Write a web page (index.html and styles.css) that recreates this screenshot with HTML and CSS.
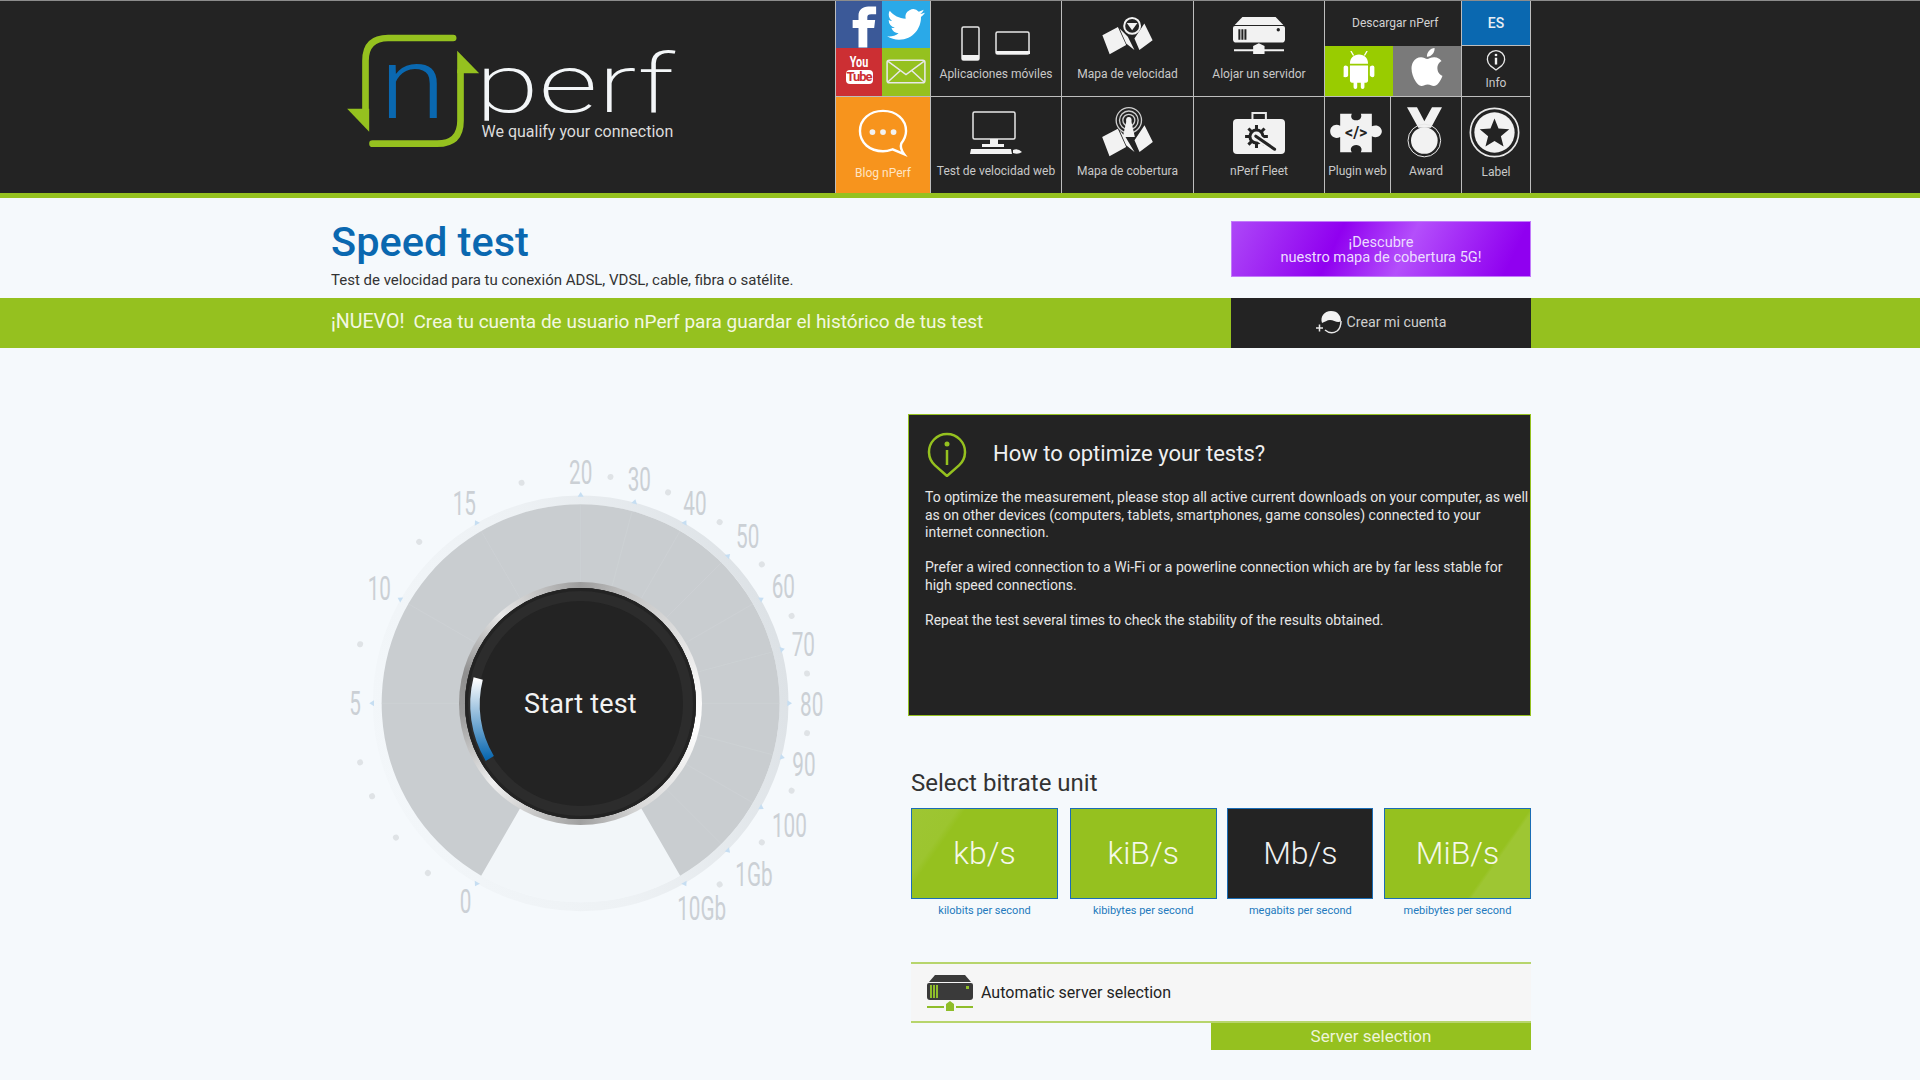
FILE: index.html
```html
<!DOCTYPE html>
<html lang="en">
<head>
    <meta charset="UTF-8">
    <meta name="viewport" content="width=device-width, initial-scale=1.0">
    <title>nPerf Speed test</title>
    <link rel="stylesheet" href="styles.css">
</head>
<body>
    <header class="topbar">
        <a class="logo" href="#">
            <svg class="logo-svg" viewBox="70 90 1010 360">
                <defs>
                    <clipPath id="perfClip"><rect x="460" y="150" width="620" height="212"/></clipPath>
                </defs>
                <path class="logo-arrow" d="M400 114H205Q137 114 137 182V335"/>
                <path class="logo-head" d="M82 326H148V395Z"/>
                <path class="logo-arrow" d="M158 431H352Q422 431 422 362V215"/>
                <path class="logo-head" d="M412 152L478 220H412Z"/>
                <text class="logo-n" transform="translate(180 355) scale(1.2 1)">n</text>
                <g clip-path="url(#perfClip)">
                    <text class="logo-perf" transform="translate(466 335) scale(1.41 1)">perf</text>
                </g>
                <text class="logo-tag" x="485" y="410">We qualify your connection</text>
            </svg>
        </a>
        <nav class="menu">
            <div class="social">
                <a class="social-item fb" href="#">
                    <svg viewBox="0 0 47 47"><path d="M23 47V27H17V19H23V14C23 9 27 5 33 5H41V13H36C33 13 32 14 32 16V19H40L39 27H32V47Z"/></svg>
                </a>
                <a class="social-item tw" href="#">
                    <svg viewBox="-3 -3 30 30"><path d="M23.953 4.57a10 10 0 01-2.825.775 4.958 4.958 0 002.163-2.723c-.951.555-2.005.959-3.127 1.184a4.92 4.92 0 00-8.384 4.482C7.69 8.095 4.067 6.13 1.64 3.162a4.822 4.822 0 00-.666 2.475c0 1.71.87 3.213 2.188 4.096a4.904 4.904 0 01-2.228-.616v.06a4.923 4.923 0 003.946 4.827 4.996 4.996 0 01-2.212.085 4.936 4.936 0 004.604 3.417 9.867 9.867 0 01-6.102 2.105c-.39 0-.779-.023-1.17-.067a13.995 13.995 0 007.557 2.209c9.053 0 13.998-7.496 13.998-13.985 0-.21 0-.42-.015-.63A9.935 9.935 0 0024 4.59z"/></svg>
                </a>
                <a class="social-item yt" href="#">
                    <span class="yt-you">You</span>
                    <span class="yt-tube">Tube</span>
                </a>
                <a class="social-item mail" href="#">
                    <svg viewBox="0 0 47 47"><rect class="line-icon" x="5" y="12" width="37" height="22" rx="2"/><path class="line-icon" d="M6 13L23.5 26L41 13M6 33L18 22M41 33L29 22"/></svg>
                </a>
            </div>
            <a class="cell" href="#">
                <svg class="icon icon-apps" viewBox="0 0 70 35">
                    <rect class="line-icon" x="1" y="1" width="17" height="33" rx="1.5"/>
                    <rect class="solid" x="1" y="29" width="17" height="5"/>
                    <rect class="line-icon" x="35" y="6" width="33" height="22" rx="1.5"/>
                    <rect class="solid" x="35" y="25" width="34" height="3"/>
                </svg>
                <span class="cell-label">Aplicaciones móviles</span>
            </a>
            <a class="cell" href="#">
                <svg class="icon icon-map" viewBox="0 0 152 115">
                    <path class="solid" d="M0 55L47 30L72 85L22 113ZM52 35L77 60L97 100L72 80ZM97 65L127 20L152 70L112 100Z"/>
                    <circle class="pin" cx="90" cy="27" r="24"/>
                    <path class="solid" d="M74 18H106L90 40Z"/>
                </svg>
                <span class="cell-label">Mapa de velocidad</span>
            </a>
            <a class="cell" href="#">
                <svg class="icon icon-server" viewBox="0 0 155 110">
                    <path class="solid" d="M28 0H127L150 24H5Z"/>
                    <path class="solid" d="M0 33Q0 27 6 27H149Q155 27 155 33V66Q155 76 145 76H10Q0 76 0 66Z"/>
                    <path class="cut" d="M16 36H22V68H16ZM25 36H31V68H25ZM34 36H40V68H34Z"/>
                    <circle class="cut" cx="135" cy="38" r="5"/>
                    <path class="solid" d="M3 96H60V86L77 78L94 86V96H152V102H94V110H60V102H3Z"/>
                </svg>
                <span class="cell-label">Alojar un servidor</span>
            </a>
            <div class="download">
                <div class="download-title">Descargar nPerf</div>
                <div class="stores">
                    <a class="store android" href="#">
                        <svg viewBox="0 0 34 42">
                            <path d="M7 14C7 8 11 4 17 4S27 8 27 14ZM7 16H27V33Q27 35 25 35H23V40Q23 42 21 42T19 40V35H15V40Q15 42 13 42T11 40V35H9Q7 35 7 33ZM2 16Q5 16 5 18V27Q5 29 2 29T0 27V18Q0 16 2 16ZM32 16Q34 16 34 18V27Q34 29 32 29T29 27V18Q29 16 32 16Z"/>
                            <path d="M11 5L8 0M23 5L26 0" class="android-ant"/>
                        </svg>
                    </a>
                    <a class="store apple" href="#">
                        <svg viewBox="0 0 24 24"><path d="M12.152 6.896c-.948 0-2.415-1.078-3.96-1.04-2.04.027-3.91 1.183-4.961 3.014-2.117 3.675-.546 9.103 1.519 12.09 1.013 1.454 2.208 3.09 3.792 3.039 1.52-.065 2.09-.987 3.935-.987 1.831 0 2.35.987 3.96.948 1.637-.026 2.676-1.48 3.676-2.948 1.156-1.688 1.636-3.325 1.662-3.415-.039-.013-3.182-1.221-3.22-4.857-.026-3.04 2.48-4.494 2.597-4.559-1.429-2.09-3.623-2.324-4.39-2.376-2-.156-3.675 1.09-4.61 1.09zM15.53 3.83c.843-1.012 1.4-2.427 1.245-3.83-1.207.052-2.662.805-3.532 1.818-.78.896-1.454 2.338-1.273 3.714 1.338.104 2.715-.688 3.559-1.701"/></svg>
                    </a>
                </div>
            </div>
            <div class="lang-info">
                <a class="lang" href="#">ES</a>
                <a class="info-link" href="#">
                    <svg class="icon-info" viewBox="0 0 22 24">
                        <path class="line-icon" d="M11 23L5 18.5A9.5 9.5 0 1 1 17 18.5Z"/>
                        <circle class="solid" cx="11" cy="6.5" r="1.5"/>
                        <rect class="solid" x="9.7" y="9.5" width="2.6" height="7.5"/>
                    </svg>
                    <span class="cell-label">Info</span>
                </a>
            </div>
            <a class="cell blog" href="#">
                <svg class="icon icon-blog" viewBox="0 0 52 50">
                    <path class="line-icon thick" d="M26 2C12 2 2 11 2 23S12 44 26 44C30 44 33 43 36 42L48 47C45 43 44 39 45 36C48 32 50 28 50 23C50 11 40 2 26 2Z"/>
                    <circle class="solid" cx="15" cy="24" r="3"/>
                    <circle class="solid" cx="26" cy="24" r="3"/>
                    <circle class="solid" cx="37" cy="24" r="3"/>
                </svg>
                <span class="cell-label">Blog nPerf</span>
            </a>
            <a class="cell" href="#">
                <svg class="icon icon-desktop" viewBox="0 0 52 43">
                    <rect class="line-icon" x="3" y="1" width="42" height="27" rx="1.5"/>
                    <path class="solid" d="M20 28H28V33H34V36H12V33H20Z"/>
                    <path class="solid" d="M1 38H41L42 43H0ZM43 39Q48 37 52 41Q48 44 43 42Z"/>
                </svg>
                <span class="cell-label">Test de velocidad web</span>
            </a>
            <a class="cell" href="#">
                <svg class="icon icon-cover" viewBox="0 0 152 150">
                    <path class="solid" d="M0 90L47 65L72 120L22 148ZM52 70L70 90L97 135L72 115ZM97 100L127 55L152 105L112 135Z"/>
                    <circle class="ring" cx="80" cy="40" r="38"/>
                    <circle class="ring" cx="80" cy="40" r="28"/>
                    <circle class="ring" cx="80" cy="40" r="18"/>
                    <path class="solid" d="M80 30Q90 30 88 45L98 90H62L72 45Q70 30 80 30Z"/>
                </svg>
                <span class="cell-label">Mapa de cobertura</span>
            </a>
            <a class="cell" href="#">
                <svg class="icon icon-fleet" viewBox="0 0 155 128">
                    <path class="line-icon thick-case" d="M58 26V6H98V26"/>
                    <rect class="solid" x="0" y="24" width="155" height="104" rx="12"/>
                    <circle class="gear" cx="70" cy="76" r="24"/>
                    <path class="gear-teeth" d="M70 42V110M36 76H104M46 52L94 100M94 52L46 100"/>
                    <circle class="solid" cx="70" cy="76" r="15"/>
                    <path class="wrench-edge" d="M74 80L120 112"/>
                    <path class="wrench" d="M68 75L124 114"/>
                </svg>
                <span class="cell-label">nPerf Fleet</span>
            </a>
            <a class="cell shift-left" href="#">
                <svg class="icon icon-plugin" viewBox="0 0 155 120">
                    <path class="solid" d="M30 2H65C60 12 65 22 78 22S96 12 92 2H125V40C140 32 155 42 155 55S140 78 125 70V118H92C98 108 92 96 78 96S58 108 65 118H30V72C15 80 0 70 0 55S15 30 30 38Z"/>
                    <text class="plugin-code" x="78" y="75">&lt;/&gt;</text>
                </svg>
                <span class="cell-label">Plugin web</span>
            </a>
            <a class="cell shift-left" href="#">
                <svg class="icon icon-award" viewBox="0 0 105 152">
                    <path class="solid" d="M0 0H30L52 42L75 0H105L72 62H34Z"/>
                    <circle class="line-icon award-rim" cx="52" cy="100" r="49"/>
                    <circle class="solid" cx="52" cy="100" r="40"/>
                </svg>
                <span class="cell-label">Award</span>
            </a>
            <a class="cell shift-left" href="#">
                <svg class="icon icon-label" viewBox="0 0 152 152">
                    <circle class="line-icon label-rim" cx="76" cy="76" r="72"/>
                    <circle class="solid" cx="76" cy="76" r="60"/>
                    <path class="cut" d="M76 34L88 64L120 66L95 87L103 118L76 101L49 118L57 87L32 66L64 64Z"/>
                </svg>
                <span class="cell-label">Label</span>
            </a>
        </nav>
    </header>

    <section class="intro">
        <div class="wrap intro-row">
            <div>
                <h1>Speed test</h1>
                <p class="intro-text">Test de velocidad para tu conexión ADSL, VDSL, cable, fibra o satélite.</p>
            </div>
            <a class="promo" href="#">¡Descubre<br>nuestro mapa de cobertura 5G!</a>
        </div>
    </section>

    <section class="banner">
        <div class="wrap banner-row">
            <p class="banner-text"><span class="banner-new">¡NUEVO!</span>Crea tu cuenta de usuario nPerf para guardar el histórico de tus test</p>
            <a class="signup" href="#">
                <svg class="signup-icon" viewBox="0 0 26 24">
                    <path class="signup-fill" d="M6 13C4 7 8 1 15 1S25 6 25 11C22 14 18 10 14 10C11 10 9 12 6 13Z"/>
                    <path class="line-icon" d="M9 20Q15 25 21 21Q25 18 25 11"/>
                    <path class="line-icon" d="M0 18H7M3.5 14.5V21.5"/>
                </svg>
                Crear mi cuenta
            </a>
        </div>
    </section>

    <main class="wrap content">
        <div class="gauge">
            <svg class="gauge-svg" viewBox="0 0 1560 1500">
                <defs>
                    <linearGradient id="ringGrad" x1="0" y1="0.7" x2="1" y2="0.4">
                        <stop offset="0" stop-color="#f3f7fa"/>
                        <stop offset="0.5" stop-color="#edf1f4"/>
                        <stop offset="1" stop-color="#dde2e6"/>
                    </linearGradient>
                    <path id="tick" d="M-9 -620L0 -634L9 -620Z"/>
                </defs>
                <circle class="gauge-ring" cx="752" cy="790" r="610"/>
                <circle class="gauge-floor" cx="752" cy="790" r="597"/>
                <path class="gauge-sector" d="M752 790L1050.5 1307A597 597 0 1 0 453.5 1307Z"/>
                <g class="gauge-lines" transform="translate(752 790)">
                    <line y1="-365" y2="-597"/>
                    <line y1="-365" y2="-597" transform="rotate(15)"/>
                    <line y1="-365" y2="-597" transform="rotate(30)"/>
                    <line y1="-365" y2="-597" transform="rotate(45)"/>
                    <line y1="-365" y2="-597" transform="rotate(60)"/>
                    <line y1="-365" y2="-597" transform="rotate(75)"/>
                    <line y1="-365" y2="-597" transform="rotate(90)"/>
                    <line y1="-365" y2="-597" transform="rotate(105)"/>
                    <line y1="-365" y2="-597" transform="rotate(120)"/>
                    <line y1="-365" y2="-597" transform="rotate(135)"/>
                    <line y1="-365" y2="-597" transform="rotate(-30)"/>
                    <line y1="-365" y2="-597" transform="rotate(-60)"/>
                    <line y1="-365" y2="-597" transform="rotate(-90)"/>
                </g>
                <g class="gauge-ticks" transform="translate(752 790)">
                    <use href="#tick"/>
                    <use href="#tick" transform="rotate(15)"/>
                    <use href="#tick" transform="rotate(30)"/>
                    <use href="#tick" transform="rotate(45)"/>
                    <use href="#tick" transform="rotate(60)"/>
                    <use href="#tick" transform="rotate(75)"/>
                    <use href="#tick" transform="rotate(90)"/>
                    <use href="#tick" transform="rotate(105)"/>
                    <use href="#tick" transform="rotate(120)"/>
                    <use href="#tick" transform="rotate(135)"/>
                    <use href="#tick" transform="rotate(150)"/>
                    <use href="#tick" transform="rotate(-30)"/>
                    <use href="#tick" transform="rotate(-60)"/>
                    <use href="#tick" transform="rotate(-90)"/>
                    <use href="#tick" transform="rotate(-150)"/>
                </g>
                <g class="gauge-dots" transform="translate(752 790)">
                    <circle cy="-685" r="9" transform="rotate(7.5)"/>
                    <circle cy="-685" r="9" transform="rotate(22.5)"/>
                    <circle cy="-685" r="9" transform="rotate(37.5)"/>
                    <circle cy="-685" r="9" transform="rotate(52.5)"/>
                    <circle cy="-685" r="9" transform="rotate(67.5)"/>
                    <circle cy="-685" r="9" transform="rotate(82.5)"/>
                    <circle cy="-685" r="9" transform="rotate(97.5)"/>
                    <circle cy="-685" r="9" transform="rotate(112.5)"/>
                    <circle cy="-685" r="9" transform="rotate(127.5)"/>
                    <circle cy="-685" r="9" transform="rotate(142.5)"/>
                    <circle cy="-685" r="9" transform="rotate(-15)"/>
                    <circle cy="-685" r="9" transform="rotate(-45)"/>
                    <circle cy="-685" r="9" transform="rotate(-75)"/>
                    <circle cy="-685" r="9" transform="rotate(-105)"/>
                    <circle cy="-685" r="9" transform="rotate(-114)"/>
                    <circle cy="-685" r="9" transform="rotate(-126)"/>
                    <circle cy="-685" r="9" transform="rotate(-138)"/>
                </g>
                <g class="gauge-nums">
                    <text transform="translate(407 1420) scale(.64 1)">0</text>
                    <text transform="translate(75 825) scale(.64 1)">5</text>
                    <text transform="translate(148 480) scale(.64 1)">10</text>
                    <text transform="translate(403 225) scale(.64 1)">15</text>
                    <text transform="translate(752 132) scale(.64 1)">20</text>
                    <text transform="translate(928 153) scale(.64 1)">30</text>
                    <text transform="translate(1095 225) scale(.64 1)">40</text>
                    <text transform="translate(1253 325) scale(.64 1)">50</text>
                    <text transform="translate(1360 475) scale(.64 1)">60</text>
                    <text transform="translate(1420 648) scale(.64 1)">70</text>
                    <text transform="translate(1445 828) scale(.64 1)">80</text>
                    <text transform="translate(1422 1008) scale(.64 1)">90</text>
                    <text transform="translate(1378 1190) scale(.64 1)">100</text>
                    <text transform="translate(1272 1338) scale(.64 1)">1Gb</text>
                    <text transform="translate(1115 1440) scale(.64 1)">10Gb</text>
                </g>
            </svg>
            <button class="dial">
                <span class="dial-inner">
                    <svg class="dial-arc" viewBox="0 0 243 243">
                        <defs>
                            <linearGradient id="arcGrad" x1="0" y1="0" x2="0" y2="1">
                                <stop offset="0" stop-color="#ffffff"/>
                                <stop offset="1" stop-color="#0a68b0"/>
                            </linearGradient>
                        </defs>
                        <path d="M19.2 96.5A105.3 105.3 0 0 0 30.8 176.5"/>
                    </svg>
                    <span class="dial-text">Start test</span>
                </span>
            </button>
        </div>

        <div class="side">
            <div class="tips">
                <div class="tips-head">
                    <svg class="tips-icon" viewBox="0 0 40 45">
                        <path d="M20 44L8 33.4A18 18 0 1 1 32 33.4Z"/>
                        <circle cx="20" cy="12" r="2.5" class="tips-dot"/>
                        <line x1="20" y1="18" x2="20" y2="33"/>
                    </svg>
                    <h2>How to optimize your tests?</h2>
                </div>
                <p>To optimize the measurement, please stop all active current downloads on your computer, as well as on other devices (computers, tablets, smartphones, game consoles) connected to your internet connection.</p>
                <p>Prefer a wired connection to a Wi-Fi or a powerline connection which are by far less stable for high speed connections.</p>
                <p>Repeat the test several times to check the stability of the results obtained.</p>
            </div>

            <div class="units">
                <h3>Select bitrate unit</h3>
                <div class="unit-row">
                    <div class="unit">
                        <a class="unit-btn shine-left" href="#">kb/s</a>
                        <span class="unit-caption">kilobits per second</span>
                    </div>
                    <div class="unit unit-second">
                        <a class="unit-btn" href="#">kiB/s</a>
                        <span class="unit-caption">kibibytes per second</span>
                    </div>
                    <div class="unit">
                        <a class="unit-btn active" href="#">Mb/s</a>
                        <span class="unit-caption">megabits per second</span>
                    </div>
                    <div class="unit">
                        <a class="unit-btn shine-right" href="#">MiB/s</a>
                        <span class="unit-caption">mebibytes per second</span>
                    </div>
                </div>
            </div>

            <div class="server">
                <div class="server-row">
                    <svg class="server-icon" viewBox="0 0 46 36">
                        <path class="server-dark" d="M8 0H38L44 7H2Z"/>
                        <path class="server-dark" d="M0 10Q0 8 2 8H44Q46 8 46 10V22Q46 25 43 25H3Q0 25 0 22Z"/>
                        <path class="server-green" d="M3 10H5V23H3ZM6 10H8V23H6ZM9 10H11V23H9ZM39 11H42V14H39Z"/>
                        <path class="server-green" d="M0 31H17V33H0ZM29 31H46V33H29ZM19 29L23 26L27 29V36H19Z"/>
                    </svg>
                    <span>Automatic server selection</span>
                </div>
                <a class="server-btn" href="#">Server selection</a>
            </div>
        </div>
    </main>
</body>
</html>
```

FILE: styles.css
```css
* {
    box-sizing: border-box;
}

body {
    font-family: Roboto, "Liberation Sans", sans-serif;
    margin: 0;
    background-color: #f5f9fc;
    color: #232323;
    overflow: hidden;
}

a {
    color: inherit;
    text-decoration: none;
}

.wrap {
    width: 1200px;
    margin-left: 331px;
}

/* header */
.topbar {
    height: 198px;
    display: flex;
    justify-content: space-between;
    padding-right: 389px;
    background-color: #232323;
    border-top: 1px solid #8c8c8c;
    border-bottom: 5px solid #95c11f;
}

.logo {
    margin-left: 343px;
    margin-top: 29px;
}

.logo-svg {
    display: block;
    width: 337px;
    height: 120px;
    overflow: visible;
}

.logo-arrow {
    fill: none;
    stroke: #95c11f;
    stroke-width: 20;
    stroke-linecap: round;
}

.logo-head {
    fill: #95c11f;
}

.logo-n {
    font-family: Roboto, sans-serif;
    font-size: 300px;
    font-weight: 300;
    fill: #0a68b0;
}

.logo-perf {
    font-family: Roboto, sans-serif;
    font-size: 246px;
    font-weight: 200;
    fill: #f3f6f8;
}

.logo-tag {
    font-size: 48px;
    fill: #dcdcdc;
}

.menu {
    display: grid;
    grid-template-columns: 94px 130px 131px 130px 65px 70px 68px;
    grid-template-rows: 95px 96px;
    gap: 1px;
    width: 696px;
    padding: 0 1px;
    background-color: #bdbdbd;
}

.social {
    display: grid;
    grid-template-columns: 46px 48px;
    grid-template-rows: 47px 48px;
}

.social-item {
    display: block;
    position: relative;
    overflow: hidden;
}

.social-item svg {
    display: block;
    width: 100%;
    height: 100%;
    fill: #fff;
}

.fb {
    background-color: #3b5998;
}

.tw {
    background-color: #2aa9e8;
}

.yt {
    background-color: #cc2f33;
    color: #fff;
    text-align: center;
    padding-top: 8px;
}

.mail {
    background-color: #95c11f;
}

.yt-you {
    display: block;
    font-size: 15px;
    line-height: 13px;
    font-weight: 700;
    transform: scaleX(.72);
}

.yt-tube {
    display: block;
    width: 27px;
    margin: 1px auto 0;
    font-size: 13px;
    line-height: 14px;
    font-weight: 700;
    background-color: #fff;
    color: #cc2f33;
    border-radius: 4px;
    letter-spacing: -1px;
}

.cell {
    display: flex;
    flex-direction: column;
    align-items: center;
    background-color: #232323;
    position: relative;
}

.shift-left .icon {
    margin-left: -4px;
}

.cell-label {
    font-size: 12px;
    line-height: 14px;
    color: #c9c9c9;
    white-space: nowrap;
}

.icon {
    display: block;
    flex: none;
}

.line-icon {
    fill: none;
    stroke: #e8e8e8;
    stroke-width: 1.5;
}

.solid {
    fill: #f2f2f2;
}

.cut {
    fill: #232323;
}

.pin {
    fill: #232323;
    stroke: #f2f2f2;
    stroke-width: 6;
}

.ring {
    fill: none;
    stroke: #cfcfcf;
    stroke-width: 4;
}

.icon-apps {
    width: 70px;
    height: 35px;
    margin: 25px 0 6px;
}

.icon-map {
    width: 51px;
    height: 38px;
    margin: 16px 0 12px;
}

.icon-server {
    width: 52px;
    height: 37px;
    margin: 16px 0 13px;
}

.icon-desktop {
    width: 52px;
    height: 43px;
    margin: 14px 0 10px;
}

.icon-cover {
    width: 51px;
    height: 50px;
    margin: 10px 0 7px;
}

.icon-fleet {
    width: 52px;
    height: 43px;
    margin: 14px 0 10px;
}

.icon-plugin {
    width: 52px;
    height: 40px;
    margin: 16px 0 11px;
}

.icon-award {
    width: 35px;
    height: 51px;
    margin: 10px 0 6px;
}

.icon-label {
    width: 51px;
    height: 51px;
    margin: 10px 0 7px;
}

.icon-blog {
    width: 50px;
    height: 48px;
    margin: 12px 0 9px;
}

.thick {
    stroke-width: 2.5;
    stroke: #fff;
}

.thick-case {
    stroke-width: 6;
}

.gear {
    fill: #232323;
}

.gear-teeth {
    stroke: #232323;
    stroke-width: 9;
    fill: none;
}

.wrench-edge {
    stroke: #f2f2f2;
    stroke-width: 20;
    stroke-linecap: round;
}

.wrench {
    stroke: #232323;
    stroke-width: 9;
    stroke-linecap: round;
}

.plugin-code {
    font-size: 48px;
    font-weight: 700;
    text-anchor: middle;
    fill: #232323;
}

.award-rim {
    stroke-width: 3;
}

.label-rim {
    stroke-width: 5;
}

.blog {
    background-color: #f7941d;
}

.blog .cell-label {
    color: #ffe5c4;
}

.download {
    grid-column: span 2;
    display: flex;
    flex-direction: column;
    background-color: #232323;
}

.download-title {
    height: 45px;
    padding-left: 27px;
    font-size: 12px;
    line-height: 45px;
    color: #d2d2d2;
}

.stores {
    display: flex;
    flex: 1;
}

.store {
    flex: 1;
    display: flex;
    align-items: center;
    justify-content: center;
}

.android {
    background-color: #99cc00;
}

.android svg {
    width: 32px;
    height: 38px;
    margin-bottom: 2px;
    fill: #fff;
}

.android-ant {
    stroke: #fff;
    stroke-width: 1.5;
    fill: none;
}

.apple {
    background-color: #7a7a7a;
}

.apple svg {
    width: 38px;
    height: 38px;
    margin-bottom: 8px;
    fill: #fff;
}

.lang-info {
    display: flex;
    flex-direction: column;
    background-color: #232323;
}

.lang {
    height: 45px;
    background-color: #0a68b0;
    border-bottom: 1px solid #bdbdbd;
    color: #e8eef4;
    font-size: 14px;
    font-weight: 500;
    text-align: center;
    line-height: 44px;
}

.info-link {
    display: flex;
    flex-direction: column;
    align-items: center;
    padding-top: 3px;
}

.icon-info {
    width: 20px;
    height: 22px;
    margin-bottom: 5px;
}

/* title row */
.intro {
    height: 100px;
}

.intro-row {
    display: flex;
    justify-content: space-between;
}

h1 {
    margin: 0;
    padding-top: 20px;
    font-size: 41.5px;
    line-height: 47px;
    font-weight: 500;
    color: #0a68b0;
}

.intro-text {
    margin: 6px 0 0;
    font-size: 15px;
    line-height: 18px;
    color: #333;
}

.promo {
    width: 300px;
    height: 56px;
    margin-top: 23px;
    padding-top: 13px;
    border: 1px solid #c27bfa;
    background: linear-gradient(115deg, #ad48f7 0%, #9000f0 35%, #b44ffb 58%, #9000f0 92%);
    color: #ecdcff;
    font-size: 14.6px;
    line-height: 15px;
    text-align: center;
}

/* green banner */
.banner {
    height: 50px;
    background-color: #95c11f;
}

.banner-row {
    display: flex;
    justify-content: space-between;
    height: 100%;
}

.banner-text {
    margin: 0;
    font-size: 19px;
    line-height: 48px;
    color: #f3f8e2;
}

.banner-new {
    margin-right: 9px;
    font-size: 19.6px;
}

.signup {
    width: 300px;
    display: flex;
    align-items: center;
    justify-content: center;
    gap: 5px;
    background-color: #232323;
    color: #cfcfcf;
    font-size: 14.2px;
    padding-bottom: 3px;
}

.signup-icon {
    width: 26px;
    height: 24px;
}

.signup-fill {
    fill: #f2f2f2;
}

/* main area */
.content {
    display: flex;
    gap: 58px;
    padding-top: 66px;
}

.gauge {
    position: relative;
    flex: none;
    width: 520px;
    height: 500px;
    margin-top: 26px;
    margin-left: -1px;
}

.gauge-svg {
    display: block;
    width: 520px;
    height: 500px;
}

.gauge-ring {
    fill: none;
    stroke: url(#ringGrad);
    stroke-width: 27;
}

.gauge-floor {
    fill: #f2f6f9;
}

.gauge-sector {
    fill: #c9cdd0;
}

.gauge-lines line {
    stroke: #d0d4d7;
    stroke-width: 1.5;
}

.gauge-ticks {
    fill: #c6def2;
}

.gauge-dots {
    fill: #dfe3e6;
}

.gauge-nums text {
    font-size: 97px;
    font-weight: 400;
    text-anchor: middle;
    fill: #cbd0d5;
}

.dial {
    position: absolute;
    left: 129px;
    top: 142px;
    width: 243px;
    height: 243px;
    padding: 6px;
    border: none;
    border-radius: 50%;
    background: conic-gradient(#9c9c9c 0deg, #c4c4c4 25deg, #f5f5f5 80deg, #ffffff 100deg, #d8d8d8 150deg, #a0a0a0 180deg, #d4d4d4 210deg, #efefef 228deg, #9a9a9a 265deg, #8f8f8f 285deg, #e8e8e8 318deg, #9c9c9c 360deg);
    font-family: inherit;
}

.dial-inner {
    display: flex;
    width: 100%;
    height: 100%;
    align-items: center;
    justify-content: center;
    border-radius: 50%;
    background-color: #232323;
    box-shadow: inset 0 0 0 3px #232323, inset 0 0 0 13px #2c2c2c;
}

.dial-arc {
    position: absolute;
    left: 0;
    top: 0;
    width: 243px;
    height: 243px;
}

.dial-arc path {
    fill: none;
    stroke: url(#arcGrad);
    stroke-width: 9.5;
}

.dial-text {
    position: relative;
    color: #f2f2f2;
    font-size: 27px;
    letter-spacing: 0.2px;
}

.side {
    width: 623px;
}

.tips {
    height: 302px;
    padding: 16px 0 0 16px;
    border: 1px solid #95c11f;
    background-color: #232323;
    color: #e6e6e6;
}

.tips-head {
    display: flex;
    align-items: center;
    gap: 26px;
    height: 47px;
    margin-bottom: 11px;
    padding-left: 2px;
}

.tips-icon {
    width: 40px;
    height: 45px;
    flex: none;
    fill: none;
    stroke: #95c11f;
    stroke-width: 2.5;
}

.tips-dot {
    fill: #95c11f;
    stroke: none;
}

.tips h2 {
    margin: 0 0 3px;
    font-size: 22px;
    font-weight: 400;
    color: #f0f0f0;
}

.tips p {
    margin: 0 0 17.5px;
    font-size: 14px;
    line-height: 17.5px;
}

.units {
    margin-left: 3px;
    margin-top: 52px;
}

.units h3 {
    margin: 0 0 10px;
    font-size: 24px;
    line-height: 30px;
    font-weight: 400;
    color: #333;
}

.unit-row {
    display: flex;
    justify-content: space-between;
}

.unit {
    display: flex;
    flex-direction: column;
    align-items: center;
}

.unit-second {
    margin-left: 1px;
}

.unit-btn {
    display: block;
    width: 147px;
    height: 91px;
    border: 1px solid #1a6db5;
    background-color: #95c11f;
    color: #f5f8ea;
    font-size: 32px;
    font-weight: 300;
    line-height: 89px;
    text-align: center;
}

.unit:nth-child(3) .unit-btn {
    width: 146px;
}

.unit-btn.active {
    background-color: #232323;
    color: #f0f0f0;
}

.shine-left {
    background: linear-gradient(125deg, #9ec633 0%, #9cc52f 22%, #95c11f 26%);
}

.shine-right {
    background: linear-gradient(125deg, #95c11f 70%, #9ec633 72%);
}

.unit-caption {
    margin-top: 5px;
    font-size: 11px;
    line-height: 14px;
    color: #2379bd;
}

.server {
    margin-left: 3px;
    margin-top: 44px;
}

.server-row {
    display: flex;
    align-items: center;
    gap: 8px;
    height: 61px;
    padding-left: 16px;
    background-color: #f6f6f6;
    border-top: 2px solid #b7d56c;
    border-bottom: 2px solid #b7d56c;
    font-size: 16px;
}

.server-icon {
    width: 46px;
    height: 36px;
}

.server-dark {
    fill: #3a3a3a;
}

.server-green {
    fill: #8fbd2a;
}

.server-btn {
    display: block;
    width: 320px;
    height: 27px;
    margin-left: auto;
    background-color: #95c11f;
    color: #eef4d8;
    font-size: 17px;
    line-height: 26px;
    text-align: center;
}
```
